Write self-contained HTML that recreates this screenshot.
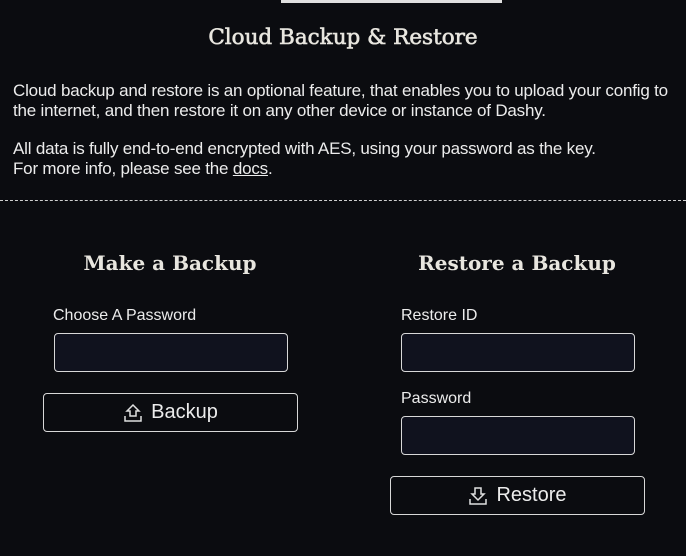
<!DOCTYPE html><html><head><style>
body{margin:0;width:686px;height:556px;background:#0b0c10;color:#ececec;font-family:"Liberation Sans",sans-serif;position:relative;overflow:hidden}
.a{position:absolute}
.t{font-family:"DejaVu Serif",serif;font-weight:bold;color:#e8e6df;white-space:nowrap}
p{margin:0}
.in{position:absolute;width:232px;height:37px;border:1px solid #d8d8d8;border-radius:4px;background:#10121e}
.btn{position:absolute;width:253px;height:37px;border:1px solid #d8d8d8;border-radius:4px;background:#0b0c10;font-size:20px;display:flex;align-items:center;justify-content:center;gap:8px}
.lb{position:absolute;font-size:16px;white-space:nowrap}
</style></head><body>
<div class="a" style="left:281px;top:0;width:221px;height:3px;background:#e0e0e0"></div>
<div class="a t" style="left:0;width:686px;text-align:center;top:25px;font-size:21.5px;-webkit-text-stroke:0.6px #e8e6df;font-weight:normal">Cloud Backup &amp; Restore</div>
<div class="a" style="left:13px;top:81px;font-size:17px;line-height:19.5px;width:690px;letter-spacing:-0.2px">
<p>Cloud backup and restore is an optional feature, that enables you to upload your config to<br>the internet, and then restore it on any other device or instance of Dashy.</p>
<p style="margin-top:19px">All data is fully end-to-end encrypted with AES, using your password as the key.<br>For more info, please see the <u>docs</u>.</p></div>
<div class="a" style="left:0;top:200px;width:686px;border-top:1px dashed #cfcfcf"></div>
<div class="a t" style="left:40px;width:260px;text-align:center;top:251px;font-size:20px">Make a Backup</div>
<div class="a t" style="left:387px;width:260px;text-align:center;top:251px;font-size:20px">Restore a Backup</div>
<div class="lb" style="left:53px;top:307px">Choose A Password</div>
<div class="in" style="left:54px;top:333px"></div>
<div class="btn" style="left:43px;top:393px"><svg width="20" height="20" viewBox="0 0 20 20" fill="none" stroke="#e0e0e0" stroke-width="1.5"><path d="M10 2L4 8h3v5h6V8h3z"/><path d="M2 13v5h16v-5"/></svg>Backup</div>
<div class="lb" style="left:401px;top:307px">Restore ID</div>
<div class="in" style="left:401px;top:333px"></div>
<div class="lb" style="left:401px;top:390px">Password</div>
<div class="in" style="left:401px;top:416px"></div>
<div class="btn" style="left:390px;top:476px"><svg width="20" height="20" viewBox="0 0 20 20" fill="none" stroke="#e0e0e0" stroke-width="1.5"><path d="M10 14L4 8h3V2h6v6h3z"/><path d="M2 13v5h16v-5"/></svg>Restore</div>
</body></html>
